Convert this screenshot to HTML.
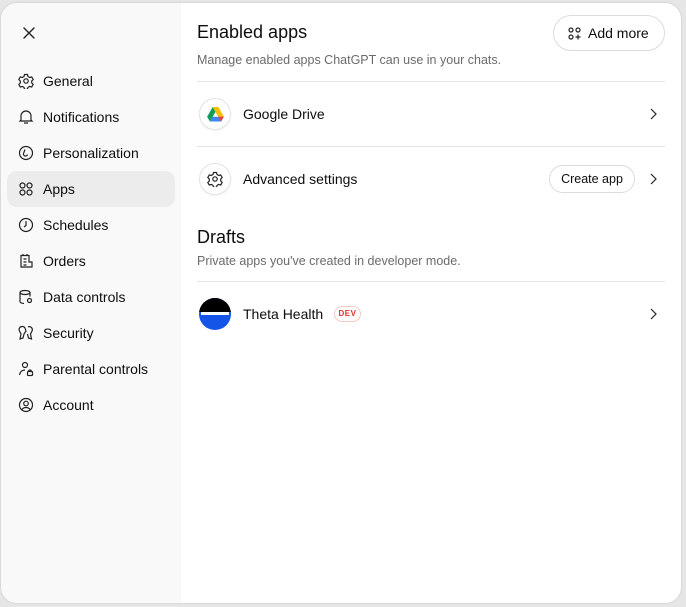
<!DOCTYPE html>
<html><head><meta charset="utf-8"><style>
*{margin:0;padding:0;box-sizing:border-box}
body{width:686px;height:607px;background:#e6e6e6;font-family:"Liberation Sans",sans-serif;position:relative;overflow:hidden;color:#0d0d0d}
.modal{position:absolute;left:1px;top:3px;width:680px;height:600px;background:#fff;border-radius:16px;overflow:hidden;box-shadow:0 0 2px rgba(0,0,0,.15)}
.side{position:absolute;left:0;top:0;width:180px;height:100%;background:#f9f9f9}
.it{position:absolute;left:6px;width:168px;height:36px;border-radius:10px;font-size:14px;line-height:36px;padding-left:36px}
.it svg{position:absolute;left:11px;top:10px}
.sel{background:#ececec}
.a{position:absolute;white-space:nowrap}
.h{font-size:18px;left:196px}
.s{font-size:12.5px;color:#6b6b6b;left:196px}
.ln{position:absolute;left:196px;width:468px;height:1px;background:#e5e5e5}
.ic{position:absolute;left:198px;width:32px;height:32px;border-radius:50%;border:1px solid #e3e3e3;box-shadow:0 1px 2px rgba(0,0,0,.05)}
.nm{position:absolute;left:242px;font-size:14px}
.chev{position:absolute;left:647px}
.btn{position:absolute;border:1px solid #dcdcdc;border-radius:20px;background:#fff;font-size:14px}
</style></head><body>
<div class="modal">
<div class="side">
<svg style="position:absolute;left:21px;top:23px" width="14" height="14" viewBox="0 0 14 14"><path d="M2 2L12 12M12 2L2 12" stroke="#222" stroke-width="1.4" stroke-linecap="round"/></svg>
<div class="it" style="top:60px"><svg width="16" height="16" viewBox="0 0 16 16" fill="none" stroke="#222" stroke-width="1.2"><path d="M6.5 1.5h3l.5 2 1.7 1 2-.6 1.5 2.6-1.5 1.5v1.9l1.5 1.5-1.5 2.6-2-.6-1.7 1-.5 2h-3l-.5-2-1.7-1-2 .6L.8 11.5l1.5-1.5V8.1L.8 6.5l1.5-2.6 2 .6 1.7-1z"/><circle cx="8" cy="8" r="2.2"/></svg>General</div>
<div class="it" style="top:96px"><svg width="16" height="16" viewBox="0 0 16 16" fill="none" stroke="#222" stroke-width="1.2"><path d="M3 11V7a5 5 0 0 1 10 0v4l1 1H2z M6 14h4"/></svg>Notifications</div>
<div class="it" style="top:132px"><svg width="16" height="16" viewBox="0 0 16 16" fill="none" stroke="#222" stroke-width="1.2"><circle cx="8" cy="8" r="6.5"/><path d="M7 4.5L5.5 8.5a2 2 0 0 0 4 1"/></svg>Personalization</div>
<div class="it sel" style="top:168px"><svg width="16" height="16" viewBox="0 0 16 16" fill="none" stroke="#222" stroke-width="1.2"><circle cx="4.5" cy="4.5" r="2.5"/><circle cx="11.5" cy="4.5" r="2.5"/><circle cx="4.5" cy="11.5" r="2.5"/><circle cx="11.5" cy="11.5" r="2.5"/></svg>Apps</div>
<div class="it" style="top:204px"><svg width="16" height="16" viewBox="0 0 16 16" fill="none" stroke="#222" stroke-width="1.2"><circle cx="8" cy="8" r="6.5"/><path d="M8 4v4.5L6 10"/></svg>Schedules</div>
<div class="it" style="top:240px"><svg width="16" height="16" viewBox="0 0 16 16" fill="none" stroke="#222" stroke-width="1.2"><path d="M11 14H3V2.5h8V9h3v5h-3zM5.5 6h3M5.5 9h3M5.5 12h3M5 1v2M9 1v2"/></svg>Orders</div>
<div class="it" style="top:276px"><svg width="16" height="16" viewBox="0 0 16 16" fill="none" stroke="#222" stroke-width="1.2"><ellipse cx="7" cy="3.5" rx="5" ry="2"/><path d="M2 3.5v9c0 1 1.5 1.8 4 2M12 3.5v4"/><circle cx="11.5" cy="11.5" r="2"/></svg>Data controls</div>
<div class="it" style="top:312px"><svg width="16" height="16" viewBox="0 0 16 16" fill="none" stroke="#222" stroke-width="1.2"><path d="M4 1.5a3 3 0 0 0-2.5 4.5L3 9l-1 5 3-1 1-4 2-3-1-3a3 3 0 0 0-3-1.5zM10 2a3 3 0 0 1 4 4l-1.5 3 1 5-3-1-1-4"/></svg>Security</div>
<div class="it" style="top:348px"><svg width="16" height="16" viewBox="0 0 16 16" fill="none" stroke="#222" stroke-width="1.2"><circle cx="7" cy="4" r="2.5"/><path d="M1.5 14c.5-3 2.5-5 5.5-5"/><rect x="9.5" y="10.5" width="5" height="4" rx="1"/><path d="M10.5 10.5a1.5 1.5 0 0 1 3 0"/></svg>Parental controls</div>
<div class="it" style="top:384px"><svg width="16" height="16" viewBox="0 0 16 16" fill="none" stroke="#222" stroke-width="1.2"><circle cx="8" cy="8" r="6.5"/><circle cx="8" cy="6.5" r="2.3"/><path d="M4 12.5c1-1.5 2.5-2 4-2s3 .5 4 2"/></svg>Account</div>
</div>

<div class="a h" style="top:19px">Enabled apps</div>
<div class="a s" style="top:50px">Manage enabled apps ChatGPT can use in your chats.</div>
<div class="btn" style="left:552px;top:12px;width:112px;height:36px;line-height:34px;padding-left:34px"><svg style="position:absolute;left:14px;top:11px" width="13" height="13" viewBox="0 0 13 13" fill="none" stroke="#222" stroke-width="1.2"><circle cx="3" cy="3" r="2"/><circle cx="10" cy="3" r="2"/><circle cx="3" cy="10" r="2"/><path d="M10 7.5v5M7.5 10h5"/></svg>Add more</div>
<div class="ln" style="top:78px"></div>

<div class="ic" style="top:95px"><svg style="position:absolute;left:7px;top:8px" width="17" height="15" viewBox="0 0 19 17"><path d="M6.3 0h6.4l6.3 11h-6.4z" fill="#fbbc04"/><path d="M6.3 0L0 11l3.2 5.5L9.5 5.5z" fill="#0f9d58"/><path d="M3.2 16.5h12.6L19 11H6.3z" fill="#4285f4"/><path d="M15.8 16.5L19 11h-6.4z" fill="#ea4335"/></svg></div>
<div class="nm" style="top:103px">Google Drive</div>
<svg class="chev" style="top:104px" width="10" height="14" viewBox="0 0 10 14"><path d="M3 2l5 5-5 5" fill="none" stroke="#222" stroke-width="1.2"/></svg>
<div class="ln" style="top:143px"></div>

<div class="ic" style="top:160px"><svg style="position:absolute;left:7px;top:7px" width="16" height="16" viewBox="0 0 16 16" fill="none" stroke="#222" stroke-width="1.2"><path d="M6.5 1.5h3l.5 2 1.7 1 2-.6 1.5 2.6-1.5 1.5v1.9l1.5 1.5-1.5 2.6-2-.6-1.7 1-.5 2h-3l-.5-2-1.7-1-2 .6L.8 11.5l1.5-1.5V8.1L.8 6.5l1.5-2.6 2 .6 1.7-1z"/><circle cx="8" cy="8" r="2.2"/></svg></div>
<div class="nm" style="top:168px">Advanced settings</div>
<div class="btn" style="left:548px;top:162px;width:86px;height:28px;line-height:26px;text-align:center;font-size:12.5px">Create app</div>
<svg class="chev" style="top:169px" width="10" height="14" viewBox="0 0 10 14"><path d="M3 2l5 5-5 5" fill="none" stroke="#222" stroke-width="1.2"/></svg>

<div class="a h" style="top:224px">Drafts</div>
<div class="a s" style="top:251px">Private apps you've created in developer mode.</div>
<div class="ln" style="top:278px"></div>

<div style="position:absolute;left:198px;top:295px;width:32px;height:32px;border-radius:50%;overflow:hidden;background:#1554e8"><div style="height:14px;background:#000"></div><div style="height:3px;background:#fff;width:28px;margin-left:2px"></div></div>
<div class="nm" style="top:303px">Theta Health</div>
<div style="position:absolute;left:333px;top:303px;width:27px;height:16px;border:1px solid #f6c9c4;border-radius:8px;color:#e0352b;font-size:8px;font-weight:bold;text-align:center;line-height:14px;letter-spacing:.5px">DEV</div>
<svg class="chev" style="top:304px" width="10" height="14" viewBox="0 0 10 14"><path d="M3 2l5 5-5 5" fill="none" stroke="#222" stroke-width="1.2"/></svg>
</div>
</body></html>
